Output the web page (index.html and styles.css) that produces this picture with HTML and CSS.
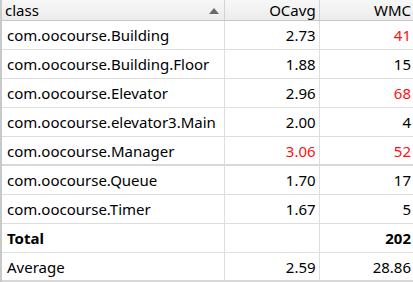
FILE: index.html
```html
<!DOCTYPE html>
<html>
<head>
<meta charset="utf-8">
<link rel="stylesheet" href="styles.css">
</head>
<body>
<div class="frame">
<table class="metrics">
  <colgroup><col class="c-class"><col class="c-num"><col class="c-num2"></colgroup>
  <thead>
    <tr>
      <th class="h-class"><span class="label">class</span><span class="sort"></span></th>
      <th class="num">OCavg</th>
      <th class="num">WMC</th>
    </tr>
  </thead>
  <tbody>
    <tr><td>com.oocourse.Building</td><td class="num">2.73</td><td class="num red">41</td></tr>
    <tr><td>com.oocourse.Building.Floor</td><td class="num">1.88</td><td class="num">15</td></tr>
    <tr><td>com.oocourse.Elevator</td><td class="num">2.96</td><td class="num red">68</td></tr>
    <tr><td>com.oocourse.elevator3.Main</td><td class="num">2.00</td><td class="num">4</td></tr>
    <tr class="split"><td>com.oocourse.Manager</td><td class="num red">3.06</td><td class="num red">52</td></tr>
    <tr><td>com.oocourse.Queue</td><td class="num">1.70</td><td class="num">17</td></tr>
    <tr><td>com.oocourse.Timer</td><td class="num">1.67</td><td class="num">5</td></tr>
    <tr class="total"><td>Total</td><td class="num"></td><td class="num">202</td></tr>
    <tr class="last"><td>Average</td><td class="num">2.59</td><td class="num">28.86</td></tr>
  </tbody>
</table>
</div>
</body>
</html>
```
FILE: styles.css
```css
html, body {
  margin: 0;
  padding: 0;
  background: #ffffff;
}
.frame {
  width: 413px;
  height: 282px;
  overflow: hidden;
  border-left: 2px solid #c9c9c9;
  box-sizing: border-box;
}
.metrics {
  border-collapse: collapse;
  table-layout: fixed;
  width: 413px;
  font-family: "Noto Sans", "Open Sans", sans-serif;
  font-size: 15px;
  color: #000;
}
.c-class { width: 222px; }
.c-num { width: 94px; }
.c-num2 { width: 95px; }
.metrics th {
  height: 20px;
  padding: 0 3px;
  font-weight: normal;
  text-align: left;
  background: linear-gradient(#f7f7f7, #ececec);
  border-bottom: 1px solid #c6c6c6;
  border-right: 1px solid #d2d2d2;
  line-height: 20px;
  white-space: nowrap;
}
.h-class {
  position: relative;
}
.sort {
  position: absolute;
  right: 5px;
  top: 8px;
  width: 0;
  height: 0;
  border-left: 5px solid transparent;
  border-right: 5px solid transparent;
  border-bottom: 6px solid #6b6b6b;
}
.metrics td {
  height: 28px;
  padding: 0 3px 0 5px;
  border-bottom: 1px solid #dedede;
  border-right: 1px solid #dedede;
  white-space: nowrap;
  overflow: hidden;
}
.metrics .num {
  text-align: right;
  padding: 0 3px 0 3px;
}
.red { color: #ff1010; }
.split td { border-bottom: 2px solid #d8d8d8; height: 27px; }
.total td { font-weight: bold; }
.last td { border-bottom: 2px solid #d8d8d8; height: 27px; }
```
